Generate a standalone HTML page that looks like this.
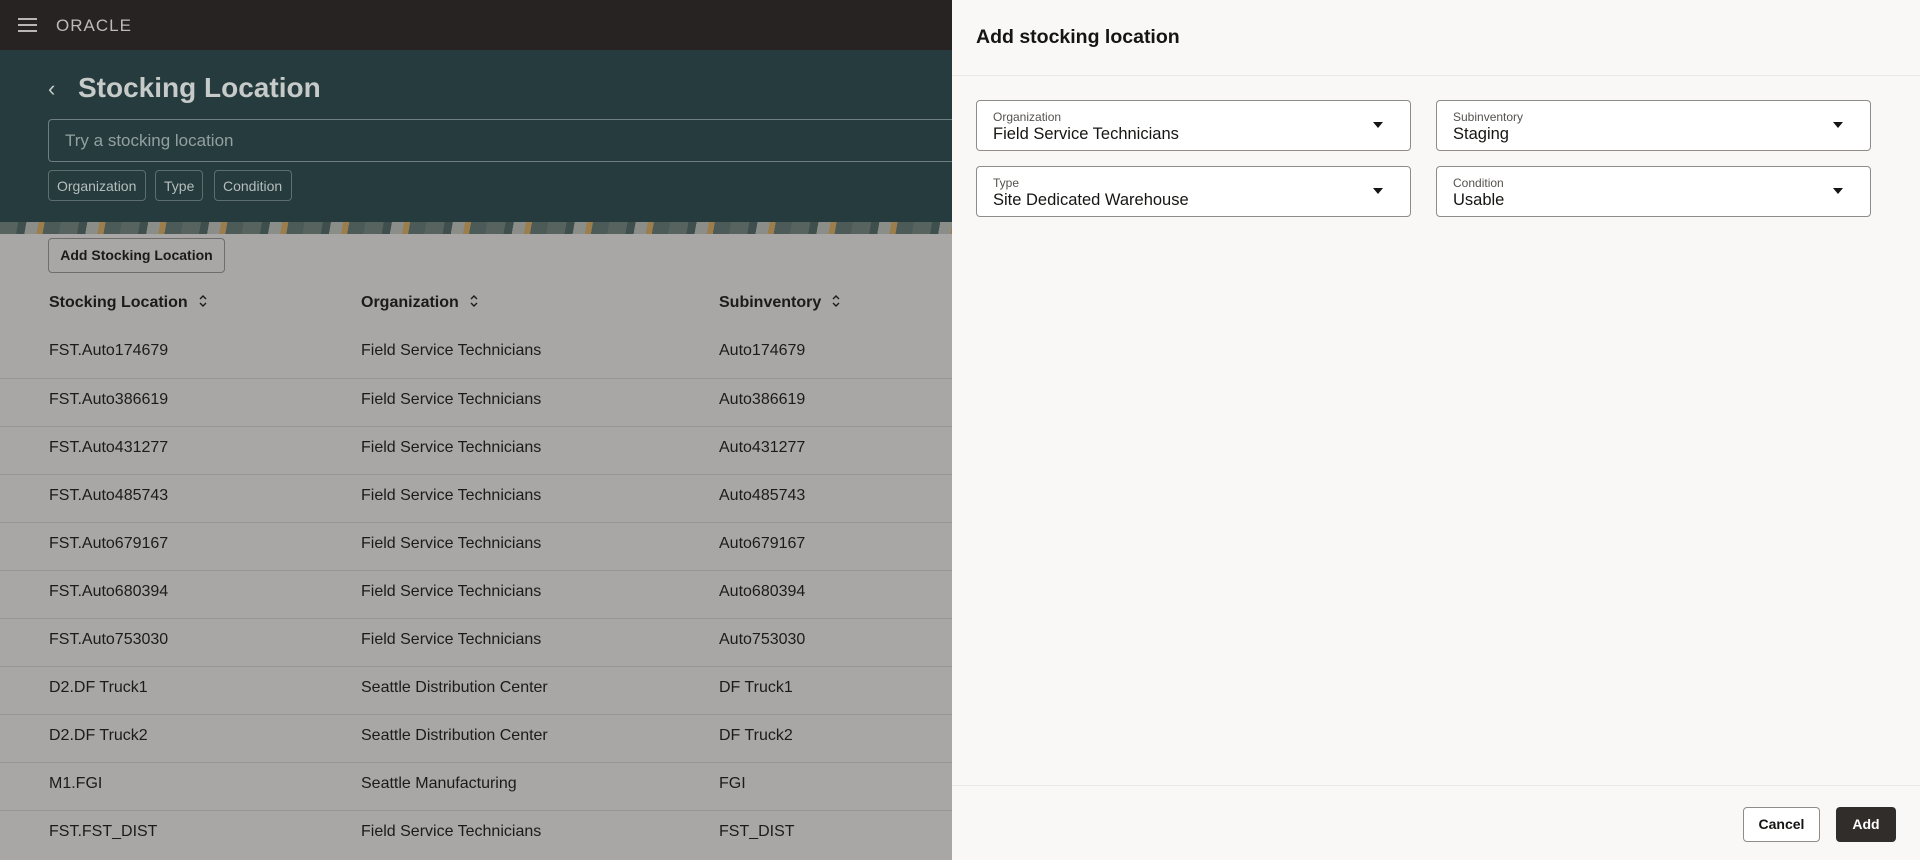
<!DOCTYPE html>
<html><head><meta charset="utf-8"><style>
*{box-sizing:border-box;margin:0;padding:0}
body{width:1920px;height:860px;overflow:hidden;font-family:"Liberation Sans",sans-serif;background:#a8a7a5;position:relative}
.hdr{position:absolute;left:0;top:0;width:952px;height:50px;background:#262322}
.teal{position:absolute;left:0;top:50px;width:952px;height:172px;background:#263b3d}
.strip{position:absolute;left:0;top:222px;width:952px;height:12px;background:repeating-linear-gradient(100deg,#56635f 0 18px,#3f4f4d 18px 26px,#8a8d88 26px 38px,#9b7e4c 38px 44px,#4d5b58 44px 60px)}
.menu{position:absolute;left:18px;top:18px;width:19px}
.menu i{display:block;height:2px;background:#b9b7b4;margin-bottom:4px}
.logo{position:absolute;left:56px;top:16px;color:#bdbbb8;font-size:17px;letter-spacing:1px}
.back{position:absolute;left:48px;top:76px;color:#c7cbca;font-size:22px}
.title{position:absolute;left:78px;top:72px;color:#c6cac9;font-size:28px;font-weight:bold}
.search{position:absolute;left:48px;top:119px;width:910px;height:43px;border:1px solid #6f7e7e;border-right:none;border-radius:4px 0 0 4px;color:#93a0a0;font-size:17px;padding:11px 16px}
.chip{position:absolute;top:170px;height:31px;border:1px solid #5e6e6e;border-radius:4px;color:#b6bdbc;font-size:14px;padding:7px 8px}
.btn{position:absolute;left:48px;top:238px;width:177px;height:35px;border:1px solid #6f6e6c;border-radius:4px;font-size:14px;font-weight:bold;color:#1c1a19;text-align:center;line-height:33px}
.th{position:absolute;top:293px;font-size:16px;font-weight:bold;color:#1d1b1a}
.th svg{vertical-align:-2px;margin-left:10px}
.row{position:absolute;left:0;width:952px;height:48px;border-top:1px solid #989795;font-size:16px;color:#1d1b1a}
.row div{position:absolute;top:12px}
.panel{position:absolute;left:952px;top:0;width:968px;height:860px;background:#f9f8f6}
.ptitle{position:absolute;left:24px;top:26px;font-size:19.5px;font-weight:bold;color:#161513}
.pdiv{position:absolute;left:0;width:968px;height:1px;background:#ebe9e6}
.f{position:absolute;width:435px;height:51px;border:1px solid #8f8c88;border-radius:4px;background:#fff}
.f .l{position:absolute;left:16px;top:9px;font-size:12px;color:#55524e}
.f .v{position:absolute;left:16px;top:24px;font-size:16.5px;color:#161513}
.f .a{position:absolute;right:27px;top:21px;width:0;height:0;border-left:5px solid transparent;border-right:5px solid transparent;border-top:6px solid #161513}
.cancel{position:absolute;left:791px;top:807px;width:77px;height:35px;border:1px solid #8f8c88;border-radius:4px;text-align:center;line-height:33px;font-size:14px;font-weight:bold;color:#161513;background:#fff}
.add{position:absolute;left:884px;top:807px;width:60px;height:35px;border-radius:4px;background:#312d2a;color:#fff;text-align:center;line-height:35px;font-size:14px;font-weight:bold}
</style></head><body>
<div class="hdr"><div class="menu"><i></i><i></i><i></i></div><div class="logo">ORACLE</div></div>
<div class="teal"></div><div class="strip"></div>
<div class="back">‹</div>
<div class="title">Stocking Location</div>
<div class="search">Try a stocking location</div>
<div class="chip" style="left:48px;width:98px">Organization</div>
<div class="chip" style="left:155px;width:48px">Type</div>
<div class="chip" style="left:214px;width:78px">Condition</div>
<div class="btn">Add Stocking Location</div>
<div class="th" style="left:49px">Stocking Location<svg width="10" height="16" viewBox="0 0 10 16"><path d="M2 6l3-3 3 3M2 10l3 3 3-3" fill="none" stroke="#1d1b1a" stroke-width="1.4"/></svg></div>
<div class="th" style="left:361px">Organization<svg width="10" height="16" viewBox="0 0 10 16"><path d="M2 6l3-3 3 3M2 10l3 3 3-3" fill="none" stroke="#1d1b1a" stroke-width="1.4"/></svg></div>
<div class="th" style="left:719px">Subinventory<svg width="10" height="16" viewBox="0 0 10 16"><path d="M2 6l3-3 3 3M2 10l3 3 3-3" fill="none" stroke="#1d1b1a" stroke-width="1.4"/></svg></div>
<div class="row" style="top:330px;border-top:none"><div style="left:49px">FST.Auto174679</div><div style="left:361px">Field Service Technicians</div><div style="left:719px">Auto174679</div></div>
<div class="row" style="top:378px"><div style="left:49px">FST.Auto386619</div><div style="left:361px">Field Service Technicians</div><div style="left:719px">Auto386619</div></div>
<div class="row" style="top:426px"><div style="left:49px">FST.Auto431277</div><div style="left:361px">Field Service Technicians</div><div style="left:719px">Auto431277</div></div>
<div class="row" style="top:474px"><div style="left:49px">FST.Auto485743</div><div style="left:361px">Field Service Technicians</div><div style="left:719px">Auto485743</div></div>
<div class="row" style="top:522px"><div style="left:49px">FST.Auto679167</div><div style="left:361px">Field Service Technicians</div><div style="left:719px">Auto679167</div></div>
<div class="row" style="top:570px"><div style="left:49px">FST.Auto680394</div><div style="left:361px">Field Service Technicians</div><div style="left:719px">Auto680394</div></div>
<div class="row" style="top:618px"><div style="left:49px">FST.Auto753030</div><div style="left:361px">Field Service Technicians</div><div style="left:719px">Auto753030</div></div>
<div class="row" style="top:666px"><div style="left:49px">D2.DF Truck1</div><div style="left:361px">Seattle Distribution Center</div><div style="left:719px">DF Truck1</div></div>
<div class="row" style="top:714px"><div style="left:49px">D2.DF Truck2</div><div style="left:361px">Seattle Distribution Center</div><div style="left:719px">DF Truck2</div></div>
<div class="row" style="top:762px"><div style="left:49px">M1.FGI</div><div style="left:361px">Seattle Manufacturing</div><div style="left:719px">FGI</div></div>
<div class="row" style="top:810px"><div style="left:49px">FST.FST_DIST</div><div style="left:361px">Field Service Technicians</div><div style="left:719px">FST_DIST</div></div>
<div class="panel">
<div class="ptitle">Add stocking location</div>
<div class="pdiv" style="top:75px"></div>
<div class="f" style="left:24px;top:100px"><div class="l">Organization</div><div class="v">Field Service Technicians</div><div class="a"></div></div>
<div class="f" style="left:484px;top:100px"><div class="l">Subinventory</div><div class="v">Staging</div><div class="a"></div></div>
<div class="f" style="left:24px;top:166px"><div class="l">Type</div><div class="v">Site Dedicated Warehouse</div><div class="a"></div></div>
<div class="f" style="left:484px;top:166px"><div class="l">Condition</div><div class="v">Usable</div><div class="a"></div></div>
<div class="pdiv" style="top:785px"></div>
<div class="cancel">Cancel</div>
<div class="add">Add</div>
</div>
</body></html>
